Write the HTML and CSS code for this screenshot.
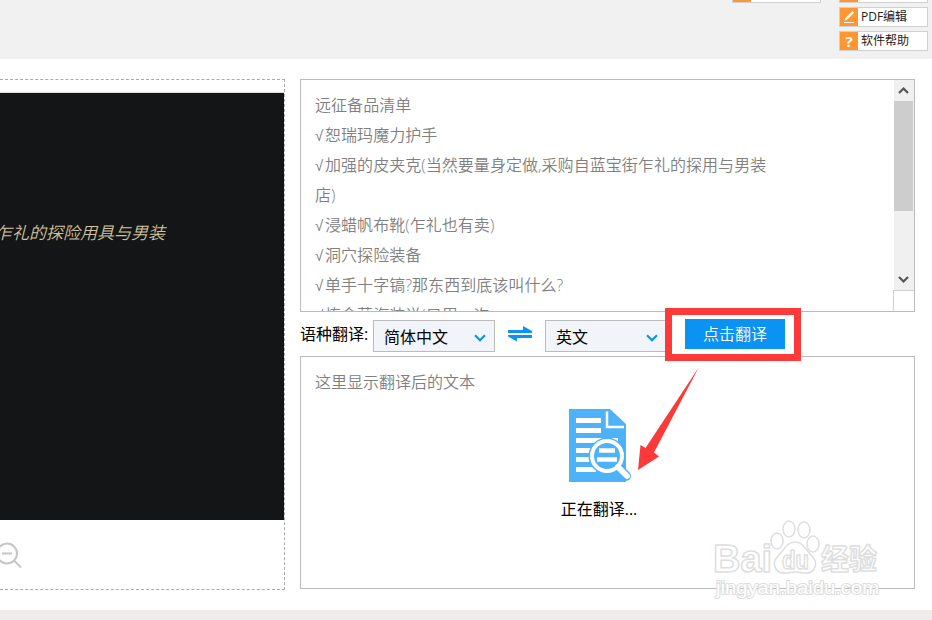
FILE: index.html
```html
<!DOCTYPE html>
<html lang="zh-CN">
<head>
  <meta charset="UTF-8">
  <title>文字翻译</title>
  <link rel="stylesheet" href="styles.css">
</head>
<body>

  <div class="toolbar">
    <div class="tool-col">
      <a class="tool cut"><span class="tool-icon"></span></a>
    </div>
    <div class="tool-col">
      <a class="tool cut"><span class="tool-icon"></span></a>
      <a class="tool">
        <span class="tool-icon">
          <svg width="19" height="18" viewBox="0 0 19 18"><path d="M4.500 12.500l.8-2.500 7.200-7 1.700 1.700-7.200 7z" fill="#fff"/><path d="M4 14.500h10" stroke="#fff"/></svg>
        </span>
        <span>PDF编辑</span>
      </a>
      <a class="tool">
        <span class="tool-icon help">?</span>
        <span>软件帮助</span>
      </a>
    </div>
  </div>

  <div class="main">
    <div class="preview">
      <div class="photo"><span class="photo-text">乍礼的探险用具与男装</span></div>
      <svg class="zoom-out" width="22" height="27" viewBox="0 0 22 27" fill="none" stroke="#c6c6c6" stroke-width="2"><circle cx="7" cy="11.500" r="10"/><path d="M2 11.500h10M14 18.500l7 7"/></svg>
    </div>

    <div class="work">
      <div class="source">
        <div class="source-text">
          <p>远征备品清单</p>
          <p><span class="tick">√</span>恕瑞玛魔力护手</p>
          <p><span class="tick">√</span>加强的皮夹克(当然要量身定做,采购自蓝宝街乍礼的探用与男装</p>
          <p>店)</p>
          <p><span class="tick">√</span>浸蜡帆布靴(乍礼也有卖)</p>
          <p><span class="tick">√</span>洞穴探险装备</p>
          <p><span class="tick">√</span>单手十字镐?那东西到底该叫什么?</p>
          <p><span class="tick">√</span>炼金蒸汽装说(只用一次</p>
        </div>
        <div class="side">
          <div class="scrollbar">
            <svg width="20" height="21" viewBox="0 0 20 21" fill="none" stroke="#555" stroke-width="2.200"><path d="M5 13l4.500-4.500 4.500 4.500"/></svg>
            <div class="thumb"></div>
            <svg class="down" width="20" height="21" viewBox="0 0 20 21" fill="none" stroke="#555" stroke-width="2.200"><path d="M5 8l4.500 4.500 4.500-4.500"/></svg>
          </div>
          <div class="corner"></div>
        </div>
      </div>

      <div class="lang-row">
        <span class="lang-label">语种翻译:</span>
        <div class="select">简体中文
          <svg width="12" height="8" viewBox="0 0 12 8" fill="none" stroke="#0a93f2" stroke-width="2.200"><path d="M1 1.200l5 5 5-5"/></svg>
        </div>
        <svg class="swap" width="24" height="16" viewBox="0 0 24 16" fill="#0a93f2"><path d="M0 4h15V0l9 5v2H0zM24 9H0v1.500l9 5V12h15z"/></svg>
        <div class="select">英文
          <svg width="12" height="8" viewBox="0 0 12 8" fill="none" stroke="#0a93f2" stroke-width="2.200"><path d="M1 1.200l5 5 5-5"/></svg>
        </div>
        <div class="highlight"><button class="translate">点击翻译</button></div>
      </div>

      <div class="result">
        <p class="hint">这里显示翻译后的文本</p>
        <div class="loading">
          <svg width="64" height="74" viewBox="0 0 64 74">
            <path d="M0 0h41l16 15v58H0z" fill="#4db2f7"/>
            <path d="M38 2.500v15.500h17" fill="none" stroke="#fff" stroke-width="2.500"/>
            <path d="M7 11.500h25M7 21.500h25M7 31.500h42M7 41.500h42M7 50.500h42M7 60.500h20" stroke="#fff" stroke-width="5"/>
            <circle cx="38" cy="47" r="18.500" fill="#4db2f7"/>
            <path d="M50 60l7 7" stroke="#4db2f7" stroke-width="10" stroke-linecap="round"/>
            <circle cx="38" cy="47" r="15" fill="none" stroke="#fff" stroke-width="4"/>
            <path d="M30 41.500h16M28 50.500h20" stroke="#fff" stroke-width="4.500"/>
            <path d="M49 58l9 9" stroke="#fff" stroke-width="6" stroke-linecap="round"/>
          </svg>
          <span>正在翻译...</span>
        </div>
      </div>
    </div>
  </div>

  <svg class="arrow" width="64" height="106" viewBox="0 0 64 106"><path d="M62 0L8.500 81 3.500 78 1 103l21-13.500-5-4z" fill="#fc3a3a"/></svg>

  <svg class="watermark" width="180" height="86" viewBox="0 0 180 86">
    <g class="mark">
      <text x="0" y="56" font-size="38" textLength="59" lengthAdjust="spacingAndGlyphs">Bai</text>
      <ellipse cx="64" cy="25" rx="6" ry="8"/>
      <ellipse cx="76" cy="13" rx="6" ry="8"/>
      <ellipse cx="91" cy="14" rx="6" ry="8"/>
      <ellipse cx="100" cy="28" rx="6" ry="8"/>
      <path d="M82 26c-9 0-11 9-17 14-7 7-3 17 6 17 5 0 7-1 11-1s6 1 11 1c9 0 13-10 6-17-6-5-8-14-17-14z"/>
      <text x="69" y="53" font-size="25" textLength="27" lengthAdjust="spacingAndGlyphs">du</text>
      <text x="108" y="54" font-size="29" textLength="56" lengthAdjust="spacingAndGlyphs">经验</text>
      <text class="url" x="3" y="78" font-size="18" textLength="163" lengthAdjust="spacingAndGlyphs">jingyan.baidu.com</text>
    </g>
  </svg>

</body>
</html>
```

FILE: styles.css
```css
* {
  box-sizing: border-box;
}

body {
  margin: 0;
  height: 620px;
  overflow: hidden;
  position: relative;
  display: flex;
  flex-direction: column;
  font-family: "Open Sans", "Noto Sans CJK SC", sans-serif;
  font-size: 16px;
  font-weight: 300;
  background: #fff;
  color: #000;
}

p {
  margin: 0;
}

svg {
  display: block;
}

.toolbar {
  height: 59px;
  flex: none;
  display: flex;
  justify-content: flex-end;
  gap: 18px;
  padding-right: 4px;
  background: #f1f1f1;
}

.tool-col {
  display: flex;
  flex-direction: column;
  gap: 4px;
}

.tool {
  display: flex;
  width: 89px;
  height: 20px;
  border: 1px solid #d0d0d0;
  background: #fff;
  font-size: 12px;
  font-weight: 400;
  line-height: 18px;
  color: #222;
}

.tool.cut {
  height: 3px;
  border-top: 0;
}

.tool-icon {
  width: 18px;
  margin-right: 3px;
  background: #ff9632;
}

.help {
  color: #fff;
  font-size: 15px;
  font-weight: 700;
  line-height: 19px;
  text-align: center;
}

.main {
  display: flex;
  gap: 15px;
  height: 551px;
  padding: 20px 17px 20px 0;
}

body::after {
  content: "";
  flex: 1;
  background: #f0ecec;
}

.preview {
  width: 285px;
  height: 511px;
  padding-top: 12px;
  border: 1px dashed #aaa;
  border-left: 0;
}

.photo {
  height: 428px;
  padding-top: 127px;
  border-top: 1px solid #ddd;
  background: #141517;
  overflow: hidden;
}

.photo-text {
  display: block;
  margin-left: -5px;
  font-size: 17px;
  line-height: 26px;
  font-weight: 350;
  font-style: italic;
  white-space: nowrap;
  color: #d0c39c;
}

.zoom-out {
  margin-top: 22px;
}

.work {
  width: 615px;
}

.source {
  display: flex;
  justify-content: space-between;
  height: 233px;
  border: 1px solid #bbb;
  overflow: hidden;
}

.source-text {
  padding: 10px 0 0 14px;
  line-height: 30px;
  font-weight: 350;
  white-space: nowrap;
  color: #808080;
}

.source-text p {
  height: 30px;
  word-spacing: 0;
  letter-spacing: 0.05px;
}

.tick {
  display: inline-block;
  width: 10px;
  line-height: 20px;
  font-family: "DejaVu Sans", sans-serif;
  font-size: 15px;
}

.side {
  width: 21px;
}

.scrollbar {
  display: flex;
  flex-direction: column;
  height: 210px;
  margin-left: 1px;
  background: #f0f0f0;
}

.thumb {
  width: 19px;
  height: 110px;
  background: #cdcdcd;
}

.down {
  margin-top: auto;
}

.corner {
  height: 21px;
  border: 1px solid #d0d0d0;
  border-width: 1px 0 0 1px;
}

.lang-row {
  display: flex;
  align-items: flex-start;
  height: 44px;
}

.lang-label {
  width: 73px;
  line-height: 45px;
  font-weight: 400;
  white-space: nowrap;
}

.select {
  display: flex;
  align-items: center;
  justify-content: space-between;
  width: 122px;
  height: 32px;
  margin-top: 8px;
  padding: 0 8px 1px 10px;
  border: 1px solid #bbb;
  background: #f1f5f9;
  font-weight: 400;
}

.select svg {
  margin-top: 5px;
}

.swap {
  margin: 14px 13px 0;
}

/* frame overlaps the rows above and below */
.highlight {
  position: relative;
  width: 136px;
  height: 53px;
  margin: -4px 0 0 -2px;
  padding: 4px 9px 0 13px;
  border: 7px solid #fc3a3a;
  background: #fff;
}

.translate {
  display: block;
  width: 100px;
  height: 30px;
  padding: 0;
  border: 0;
  background: #0a93f2;
  color: #fff;
  font: inherit;
  font-weight: 350;
  line-height: 30px;
}

.result {
  height: 233px;
  padding: 10px 14px;
  border: 1px solid #bbb;
}

.hint {
  line-height: 30px;
  font-weight: 350;
  color: #808080;
}

.loading {
  display: flex;
  flex-direction: column;
  align-items: center;
  width: 100px;
  margin: 12px 0 0 234px;
  line-height: 30px;
}

.loading svg {
  margin: 0 0 11px 3px;
}

.loading span {
  font-weight: 400;
}

.arrow {
  position: absolute;
  left: 637px;
  top: 367px;
}

.watermark {
  position: absolute;
  left: 713px;
  top: 516px;
  font-family: "Liberation Sans", "Noto Sans CJK SC", sans-serif;
  font-weight: 700;
}

.mark {
  fill: #fff;
  stroke: #dedede;
  stroke-width: 1.5;
  stroke-linejoin: round;
}

.mark .url {
  stroke-width: 2;
  paint-order: stroke;
  font-weight: 400;
}
```
